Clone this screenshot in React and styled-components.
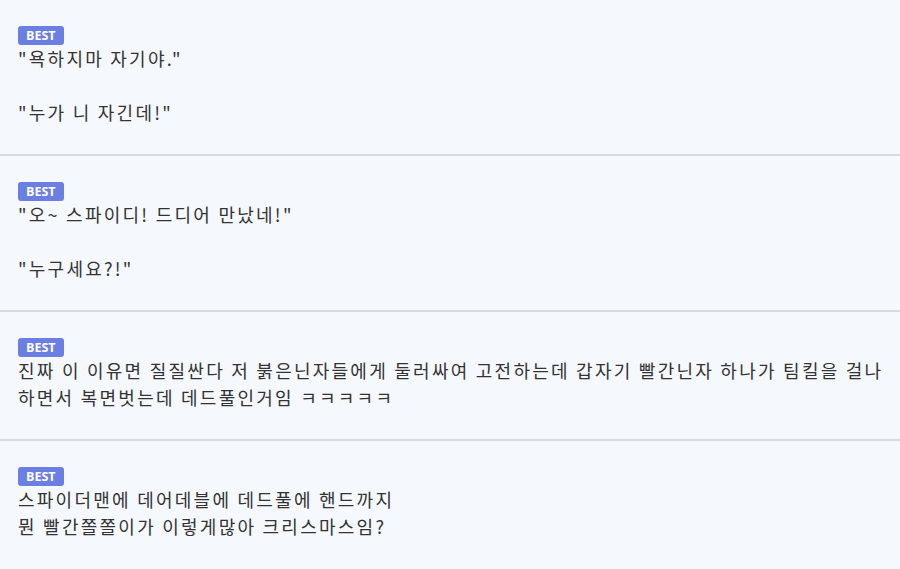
import React from "react";
import styled, { createGlobalStyle } from "styled-components";

const GlobalStyle = createGlobalStyle`
  body {
    margin: 0;
    background: #f5f8fd;
    font-family: "Noto Sans CJK KR", "Noto Sans", sans-serif;
  }
`;

const List = styled.ul`
  list-style: none;
  margin: 0;
  padding: 0;
`;

const Item = styled.li`
  padding: 26px 8px 28px 18px;
  border-bottom: 2px solid #d6d9de;
  &:last-child {
    border-bottom: none;
  }
`;

const Badge = styled.span`
  display: block;
  width: fit-content;
  height: 19px;
  line-height: 19px;
  padding: 0 8px;
  border-radius: 3px;
  background: #6b7fe3;
  color: #fff;
  font-family: "Open Sans", "Liberation Sans", sans-serif;
  font-size: 12.5px;
  font-weight: 700;
`;

const Text = styled.p`
  margin: 0;
  font-size: 18px;
  line-height: 27px;
  letter-spacing: 2.25px;
  color: #333;
  white-space: pre-line;
  word-break: keep-all;
`;

const comments = [
  '"욕하지마 자기야."\n\n"누가 니 자긴데!"',
  '"오~ 스파이디! 드디어 만났네!"\n\n"누구세요?!"',
  "진짜 이 이유면 질질싼다 저 붉은닌자들에게 둘러싸여 고전하는데 갑자기 빨간닌자 하나가 팀킬을 걸나 하면서 복면벗는데 데드풀인거임 ㅋㅋㅋㅋㅋ",
  "스파이더맨에 데어데블에 데드풀에 핸드까지\n뭔 빨간쫄쫄이가 이렇게많아 크리스마스임?",
];

export default function App() {
  return (
    <>
      <GlobalStyle />
      <List>
        {comments.map((c, i) => (
          <Item key={i}>
            <Badge>BEST</Badge>
            <Text>{c}</Text>
          </Item>
        ))}
      </List>
    </>
  );
}
